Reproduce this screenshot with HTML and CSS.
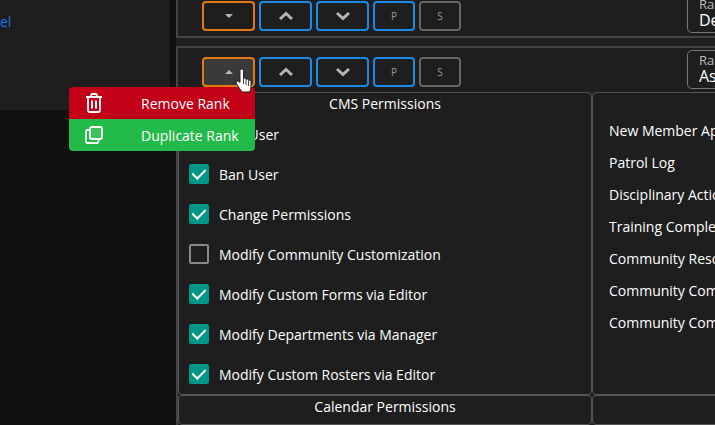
FILE: index.html
```html
<!DOCTYPE html>
<html lang="en">
<head>
    <meta charset="UTF-8">
    <title>Ranks</title>
    <link rel="stylesheet" href="styles.css">
</head>
<body>
    <div class="page">
        <aside class="side">
            <div class="side-panel"><a class="side-link" href="#">el</a></div>
        </aside>
        <main class="main">
            <section class="card card-first">
                <div class="rank-row">
                    <div class="btns">
                        <button class="btn btn-orange"><svg width="10" height="6" viewBox="0 0 10 6"><path d="M1 1h8L5 5z" fill="#b5b5b5"/></svg></button>
                        <button class="btn btn-blue"><svg width="16" height="10" viewBox="0 0 16 10"><path d="M2 8l6-5.500L14 8" fill="none" stroke="#b5b5b5" stroke-width="3"/></svg></button>
                        <button class="btn btn-blue"><svg width="16" height="10" viewBox="0 0 16 10"><path d="M2 2l6 5.500L14 2" fill="none" stroke="#b5b5b5" stroke-width="3"/></svg></button>
                        <button class="btn btn-blue btn-small">P</button>
                        <button class="btn btn-gray btn-small">S</button>
                    </div>
                    <div class="rank-field">
                        <span class="rank-label">Rank Name</span>
                        <span class="rank-value">Deputy Chief</span>
                    </div>
                </div>
            </section>

            <section class="card">
                <div class="rank-row">
                    <div class="btns">
                        <button class="btn btn-orange btn-hover"><svg width="10" height="6" viewBox="0 0 10 6"><path d="M1 5h8L5 1z" fill="#b5b5b5"/></svg></button>
                        <button class="btn btn-blue"><svg width="16" height="10" viewBox="0 0 16 10"><path d="M2 8l6-5.500L14 8" fill="none" stroke="#b5b5b5" stroke-width="3"/></svg></button>
                        <button class="btn btn-blue"><svg width="16" height="10" viewBox="0 0 16 10"><path d="M2 2l6 5.500L14 2" fill="none" stroke="#b5b5b5" stroke-width="3"/></svg></button>
                        <button class="btn btn-blue btn-small">P</button>
                        <button class="btn btn-gray btn-small">S</button>
                    </div>
                    <div class="rank-field">
                        <span class="rank-label">Rank Name</span>
                        <span class="rank-value">Assistant Chief</span>
                    </div>
                </div>

                <div class="perm-grid">
                    <div class="perm-cell">
                        <div class="perm-title">CMS Permissions</div>
                        <label class="perm-row"><span class="check on"></span>Add User</label>
                        <label class="perm-row"><span class="check on"></span>Ban User</label>
                        <label class="perm-row"><span class="check on"></span>Change Permissions</label>
                        <label class="perm-row"><span class="check"></span>Modify Community Customization</label>
                        <label class="perm-row"><span class="check on"></span>Modify Custom Forms via Editor</label>
                        <label class="perm-row"><span class="check on"></span>Modify Departments via Manager</label>
                        <label class="perm-row"><span class="check on"></span>Modify Custom Rosters via Editor</label>
                    </div>
                    <div class="perm-cell perm-cell-plain">
                        <div class="perm-title"></div>
                        <div class="plain-row">New Member Applications</div>
                        <div class="plain-row">Patrol Log</div>
                        <div class="plain-row">Disciplinary Actions</div>
                        <div class="plain-row">Training Completed</div>
                        <div class="plain-row">Community Resources</div>
                        <div class="plain-row">Community Computers</div>
                        <div class="plain-row">Community Commands</div>
                    </div>
                    <div class="perm-cell">
                        <div class="perm-title">Calendar Permissions</div>
                    </div>
                    <div class="perm-cell"></div>
                </div>
            </section>
        </main>

        <div class="rank-menu">
            <div class="menu-item menu-red">
                <svg class="menu-icon" width="18" height="20" viewBox="0 0 18 20" fill="none" stroke="#fff" stroke-width="1.800">
                    <path d="M1 4h16M6 4V2.500Q6 1 7.500 1h3Q12 1 12 2.500V4"/>
                    <path d="M3 4v13.500Q3 19 4.500 19h9Q15 19 15 17.500V4"/>
                    <path d="M7 7.500v8M11 7.500v8" stroke-width="2"/>
                </svg>
                Remove Rank
            </div>
            <div class="menu-item menu-green">
                <svg class="menu-icon" width="18" height="18" viewBox="0 0 18 18" fill="none" stroke="#fff" stroke-width="1.800">
                    <rect x="5" y="1" width="12" height="12" rx="1.500" fill="#fff" fill-opacity="0.12"/>
                    <path d="M5 4H2.500Q1 4 1 5.500v9.500Q1 17 2.500 17H12q1.500 0 1.500-1.500V13"/>
                </svg>
                Duplicate Rank
            </div>
        </div>

        <svg class="pointer" width="18" height="26" viewBox="0 0 18 26">
            <path d="M5 3.500Q5 2 6.750 2 8.500 2 8.500 3.500V11Q10.500 10.500 11 12 13 11.500 13.500 13 15.500 12.500 16 14.500V20Q16 23 14.500 25H8Q7 25 6 23.500L1.500 17Q.5 15 2 14 3.500 13.500 5 15.500z" fill="#fff" stroke="#222" stroke-width="1"/>
            <path d="M8.500 11v6M11 12v6M13.500 13v6" stroke="#333" stroke-width="0.900"/>
        </svg>
    </div>
</body>
</html>
```

FILE: styles.css
```css
html { box-sizing: border-box; }
*, *:before, *:after { box-sizing: inherit; }
body {
    margin: 0;
    background: #111;
    color: #fff;
    font-family: "Open Sans", sans-serif;
    font-size: 14px;
}
.page {
    position: relative;
    display: flex;
    height: 425px;
    overflow: hidden;
}
.side {
    flex: 0 0 170px;
}
.side-panel {
    height: 110px;
    padding-top: 12px;
    background: #1e1e1e;
}
.side-link {
    color: #1a73e8;
    text-decoration: none;
}
.main {
    flex: 0 0 800px;
    margin-left: 6px;
    background: #1e1e1e;
}
.card {
    border: 2px solid #444;
    border-bottom: 0;
}
.card-first {
    margin-top: -10px;
    margin-bottom: 8px;
    padding-bottom: 3px;
    border-bottom: 2px solid #444;
}
.rank-row {
    display: flex;
    padding: 2px 0 0 24px;
}
.btns {
    display: flex;
    gap: 4px;
    padding-top: 7px;
}
.btn {
    display: flex;
    align-items: center;
    justify-content: center;
    width: 53px;
    height: 30px;
    padding: 0;
    border: 2px solid #666;
    border-radius: 4px;
    background: transparent;
    color: #999;
    font-family: inherit;
    font-size: 10px;
}
.btn-small { width: 42px; }
.btn-orange { border-color: #e07b14; }
.btn-blue { border-color: #1e88e5; }
.btn-gray { border-color: #666; }
.btn-hover { background: #3a3a3a; }
.rank-field {
    display: flex;
    flex-direction: column;
    width: 120px;
    height: 39px;
    margin-left: 226px;
    padding: 3px 11px 0;
    border: 1px solid #777;
    border-radius: 5px;
    white-space: nowrap;
}
.rank-label {
    font-size: 13px;
    line-height: 13px;
    color: #bbb;
}
.rank-value {
    font-size: 16px;
    line-height: 18px;
}
.perm-grid {
    display: grid;
    grid-template-columns: 414px 1fr;
    margin-top: 3px;
}
.perm-cell {
    border: 1px solid #555;
    border-radius: 4px;
    min-height: 30px;
}
.perm-title {
    height: 21px;
    line-height: 21px;
    text-align: center;
}
.perm-row {
    display: flex;
    align-items: center;
    gap: 10px;
    height: 40px;
    padding-left: 10px;
}
.check {
    position: relative;
    width: 20px;
    height: 20px;
    border: 2px solid #888;
    border-radius: 2px;
}
.check.on {
    border-color: #009688;
    background: #009688;
}
.check.on:after {
    content: "";
    position: absolute;
    left: 4px;
    top: 0;
    width: 8px;
    height: 13px;
    border: solid #fff;
    border-width: 0 2px 2px 0;
    transform: rotate(45deg);
}
.perm-cell-plain {
    padding-left: 16px;
}
.plain-row {
    height: 32px;
    line-height: 34px;
    white-space: nowrap;
}
.rank-menu {
    position: absolute;
    left: 69px;
    top: 87px;
    width: 186px;
    border-radius: 4px;
    overflow: hidden;
}
.menu-item {
    display: flex;
    align-items: center;
    height: 32px;
    padding-left: 16px;
}
.menu-icon {
    flex: 0 0 18px;
    margin-right: 38px;
}
.menu-red { background: #c20017; }
.menu-green { background: #22bb4a; }
.pointer {
    position: absolute;
    left: 235px;
    top: 67px;
}
```
